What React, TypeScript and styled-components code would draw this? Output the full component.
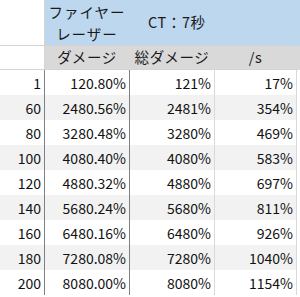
import styled, { createGlobalStyle } from 'styled-components';

const GlobalStyle = createGlobalStyle`
  html, body {
    margin: 0;
    padding: 0;
    background: #ffffff;
  }
  body {
    font-family: "Noto Sans CJK JP", "Noto Sans", sans-serif;
    color: #000;
  }
`;

const rows: [number, string, string, string][] = [
  [1, '120.80%', '121%', '17%'],
  [60, '2480.56%', '2481%', '354%'],
  [80, '3280.48%', '3280%', '469%'],
  [100, '4080.40%', '4080%', '583%'],
  [120, '4880.32%', '4880%', '697%'],
  [140, '5680.24%', '5680%', '811%'],
  [160, '6480.16%', '6480%', '926%'],
  [180, '7280.08%', '7280%', '1040%'],
  [200, '8080.00%', '8080%', '1154%'],
];

const Sheet = styled.div`
  width: 300px;
  height: 297px;
  overflow: hidden;
  font-size: 14px;
`;

type TypeRow = {
  $height: number;
  $bg: string;
};

const Row = styled.div<TypeRow>`
  display: grid;
  grid-template-columns: 45px 85px 85px 82px 3px;
  height: ${({ $height }) => $height}px;
  background: ${({ $bg }) => $bg};
`;

type TypeCell = {
  $align?: 'left' | 'center' | 'right';
  $line?: string;
  $bg?: string;
};

const Cell = styled.div<TypeCell>`
  display: flex;
  align-items: center;
  justify-content: ${({ $align }) =>
    $align === 'right' ? 'flex-end' : $align === 'center' ? 'center' : 'flex-start'};
  padding: 0 3px;
  border-right: 1px solid ${({ $line }) => $line ?? 'transparent'};
  background: ${({ $bg }) => $bg ?? 'transparent'};
  white-space: nowrap;
  line-height: 1;
  color: #111;
`;

const HeaderCell = styled(Cell)`
  border-bottom: 1px solid #d4d4d4;
  font-size: 14.5px;
  letter-spacing: 0.6px;
  color: #1a1a1a;
`;

const CooldownCell = styled(HeaderCell)`
  padding-left: 18px;
`;

const WrapTitle = styled.div`
  text-align: center;
  line-height: 22px;
  letter-spacing: 1px;
  padding-top: 1px;
`;

const Spacer = styled.div<{ $bg?: string }>`
  background: ${({ $bg }) => $bg ?? 'transparent'};
`;

const BLUE = '#bdd7ee';
const GRAY = '#d9d9d9';

export default function App() {
  return (
    <Sheet>
      <GlobalStyle />
      <Row $height={46} $bg={BLUE}>
        <HeaderCell $bg="#ffffff" $line="#d4d4d4" />
        <HeaderCell $align="center">
          <WrapTitle>
            ファイヤー
            <br />
            レーザー
          </WrapTitle>
        </HeaderCell>
        <CooldownCell $align="left">CT：7秒</CooldownCell>
        <HeaderCell />
        <Spacer />
      </Row>
      <Row $height={24} $bg={GRAY}>
        <HeaderCell $bg="#ffffff" $line="#d4d4d4" />
        <HeaderCell $align="center">ダメージ</HeaderCell>
        <HeaderCell $align="center">総ダメージ</HeaderCell>
        <HeaderCell $align="center">/s</HeaderCell>
        <Spacer />
      </Row>
      {rows.map(([level, dmg, total, perSec], i) => (
        <Row key={level} $height={25} $bg={i % 2 === 1 ? '#f2f2f2' : '#ffffff'}>
          <Cell $align="right" $line="#808080">{level}</Cell>
          <Cell $align="right" $line="#808080">{dmg}</Cell>
          <Cell $align="right" $line="#d9d9d9">{total}</Cell>
          <Cell $align="right" $line="#d9d9d9">{perSec}</Cell>
          <Spacer $bg="#ffffff" />
        </Row>
      ))}
    </Sheet>
  );
}
